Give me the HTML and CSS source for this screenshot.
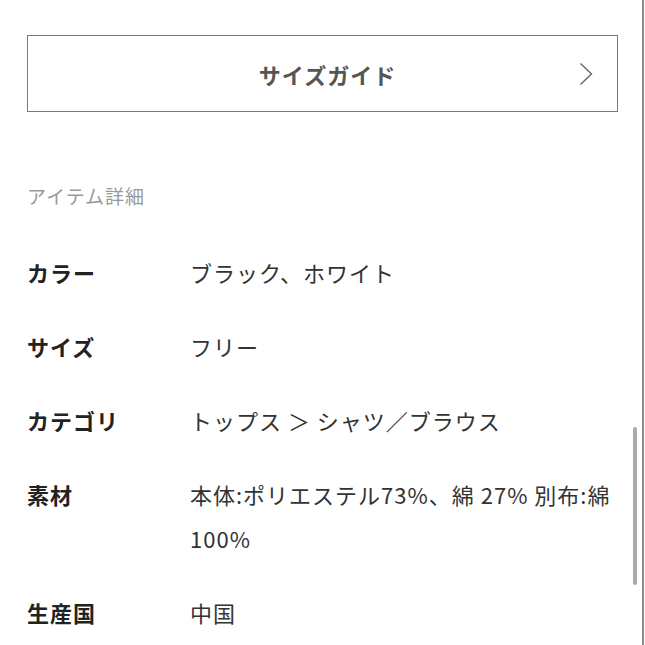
FILE: index.html
```html
<!DOCTYPE html>
<html lang="ja">
<head>
  <meta charset="UTF-8">
  <meta name="viewport" content="width=device-width, initial-scale=1.0">
  <title>アイテム詳細</title>
  <link rel="stylesheet" href="styles.css">
</head>
<body>
  <div class="page">
    <a class="size-guide" href="#">
      <span class="size-guide-label">サイズガイド</span>
      <svg class="chevron" viewBox="0 0 14 24" width="14" height="24">
        <path d="M1.5 1.5 L12.5 12 L1.5 22.5" fill="none" stroke="#666" stroke-width="1.4"/>
      </svg>
    </a>

    <h2 class="section-title">アイテム詳細</h2>

    <dl class="details">
      <div class="detail-row">
        <dt>カラー</dt>
        <dd>ブラック、ホワイト</dd>
      </div>
      <div class="detail-row">
        <dt>サイズ</dt>
        <dd>フリー</dd>
      </div>
      <div class="detail-row">
        <dt>カテゴリ</dt>
        <dd>トップス ＞ シャツ／ブラウス</dd>
      </div>
      <div class="detail-row">
        <dt>素材</dt>
        <dd>本体:ポリエステル73%、綿 27% 別布:綿 100%</dd>
      </div>
      <div class="detail-row">
        <dt>生産国</dt>
        <dd>中国</dd>
      </div>
    </dl>

    <div class="scroll-thumb"></div>
  </div>
</body>
</html>
```

FILE: styles.css
```css
body {
  margin: 0;
  font-family: "Noto Sans CJK JP", "Noto Sans", sans-serif;
  background: #fff;
}
.page {
  position: relative;
  height: 645px;
  box-sizing: border-box;
  width: 644px;
  border-right: 2px solid #8a8a8a;
  padding: 35px 24px 0 27px;
  overflow: hidden;
}
.size-guide {
  display: flex;
  align-items: center;
  justify-content: center;
  position: relative;
  height: 77px;
  box-sizing: border-box;
  border: 1px solid #7a7a7a;
  text-decoration: none;
}
.size-guide-label {
  font-size: 22px;
  font-weight: bold;
  letter-spacing: 1px;
  color: #555;
  padding-left: 10px;
}
.chevron {
  position: absolute;
  right: 24px;
  top: 26px;
}
.section-title {
  margin: 69px 0 0;
  font-size: 19px;
  line-height: 30px;
  letter-spacing: 1px;
  font-weight: normal;
  color: #999;
}
.details {
  margin: 39px 0 0;
  display: flex;
  flex-direction: column;
  gap: 30px;
}
.detail-row {
  display: flex;
  font-size: 22px;
  line-height: 44px;
  letter-spacing: 1px;
}
.detail-row dt {
  flex: 0 0 163px;
  font-weight: bold;
  color: #222;
}
.detail-row dd {
  margin: 0;
  flex: 1;
  color: #333;
}
.scroll-thumb {
  position: absolute;
  right: 5px;
  top: 427px;
  width: 4px;
  height: 158px;
  border-radius: 2px;
  background: #aaa;
}
```
